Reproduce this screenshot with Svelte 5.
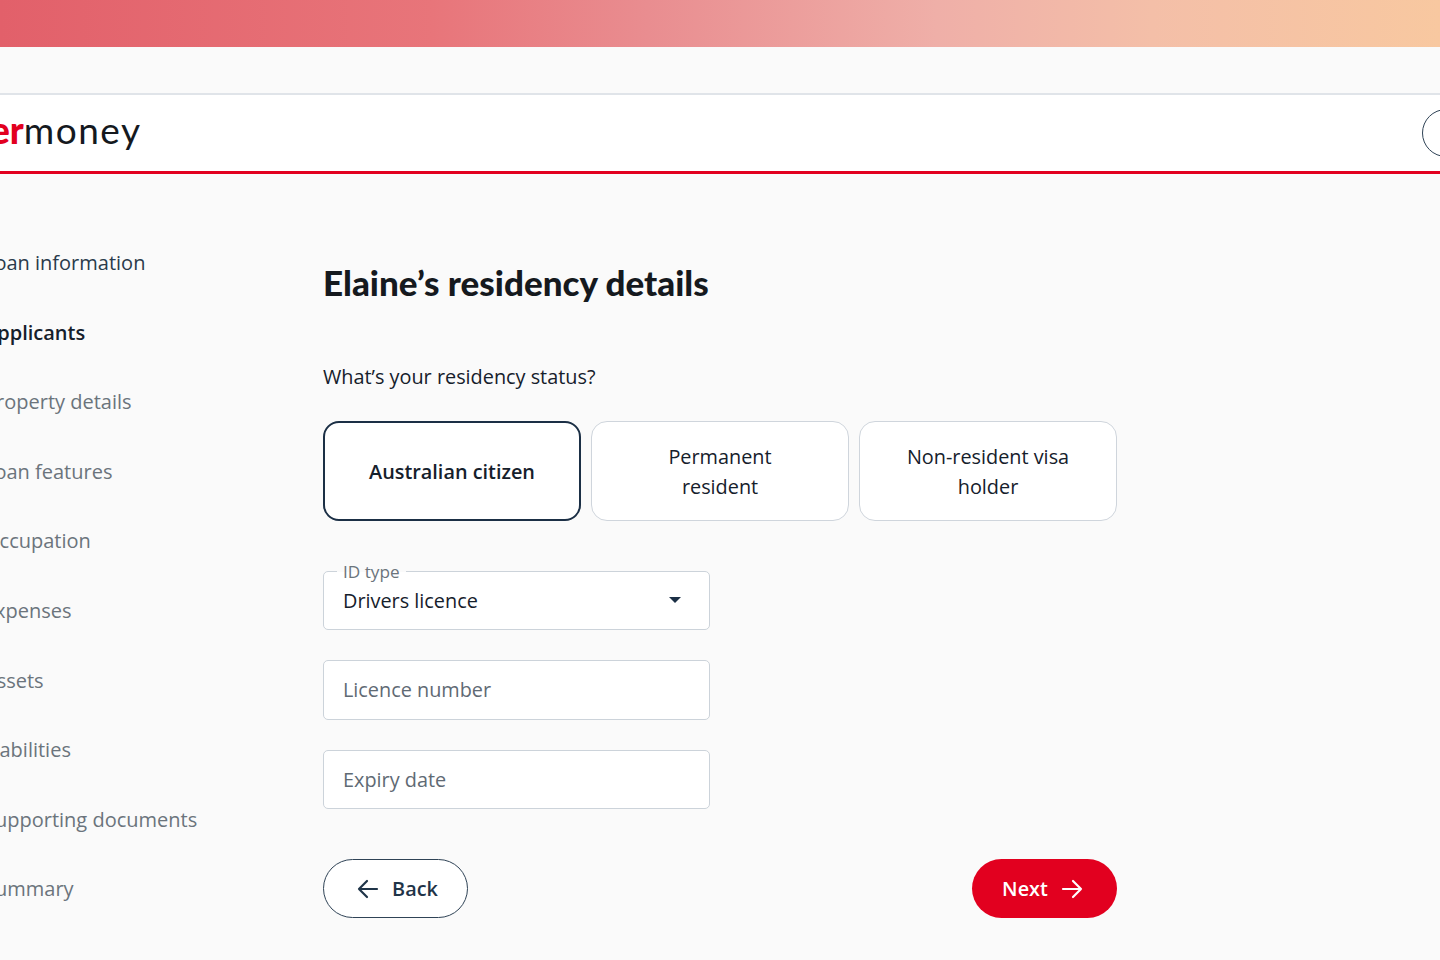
<script>
  const steps = [
    { label: "Loan information", state: "done" },
    { label: "Applicants", state: "active" },
    { label: "Property details" },
    { label: "Loan features" },
    { label: "Occupation" },
    { label: "Expenses" },
    { label: "Assets" },
    { label: "Liabilities" },
    { label: "Supporting documents" },
    { label: "Summary" },
  ];

  const statuses = [
    { label: "Australian citizen", selected: true },
    { label: "Permanent resident" },
    { label: "Non-resident visa holder" },
  ];
</script>

<div class="page">
  <div class="topbar"></div>

  <header>
    <div class="logo"><span class="red">er</span>money</div>
    <div class="avatar"></div>
  </header>

  <div class="layout">
    <nav>
      {#each steps as step}
        <a href="#top" class={step.state ?? ""}>{step.label}</a>
      {/each}
    </nav>

    <main>
      <h1>Elaine’s residency details</h1>
      <p class="question">What’s your residency status?</p>

      <div class="tiles">
        {#each statuses as status}
          <button class="tile" class:selected={status.selected}>
            <span>{status.label}</span>
          </button>
        {/each}
      </div>

      <div class="fields">
        <div class="field select">
          <span class="float">ID type</span>
          <span class="value">Drivers licence</span>
          <svg width="12" height="6" viewBox="0 0 12 6"><path d="M0 0h12L6 6z" fill="#1b2f45" /></svg>
        </div>
        <div class="field"><span class="placeholder">Licence number</span></div>
        <div class="field"><span class="placeholder">Expiry date</span></div>
      </div>

      <div class="actions">
        <button class="pill back">
          <svg width="22" height="20" viewBox="0 0 22 20" fill="none" stroke="currentColor" stroke-width="2.2" stroke-linecap="round" stroke-linejoin="round">
            <path d="M20 10H2M10 2l-8 8 8 8" />
          </svg>
          Back
        </button>
        <button class="pill next">
          Next
          <svg width="22" height="20" viewBox="0 0 22 20" fill="none" stroke="currentColor" stroke-width="2.2" stroke-linecap="round" stroke-linejoin="round">
            <path d="M2 10h18M12 2l8 8-8 8" />
          </svg>
        </button>
      </div>
    </main>
  </div>
</div>

<style>
  :global(body) {
    background: #fafafa;
    overflow: hidden;
  }

  .page {
    height: 960px;
    font-family: "Open Sans", sans-serif;
    color: #15202b;
    overflow: hidden;
  }

  .topbar {
    height: 47px;
    background: linear-gradient(90deg, #e2606a 0%, #e8757a 30%, #e98d90 45%, #efafa8 65%, #f4bfa8 80%, #f8c8a0 100%);
  }

  header {
    margin-top: 46px;
    height: 81px;
    box-sizing: border-box;
    border-top: 2px solid #e0e4e9;
    border-bottom: 3px solid #e2001f;
    background: #fff;
    display: flex;
    align-items: center;
    justify-content: space-between;
  }

  .logo {
    margin-left: -10px;
    margin-top: -7px;
    font-family: Lato, sans-serif;
    font-size: 37px;
    letter-spacing: 1.5px;
    color: #15191e;
    font-weight: 400;
  }

  .red {
    color: #e2001f;
    font-weight: 900;
    letter-spacing: 0;
  }

  .avatar {
    width: 48px;
    height: 48px;
    flex: none;
    box-sizing: border-box;
    border: 1.5px solid #2f4356;
    border-radius: 50%;
    margin-right: -30px;
  }

  .layout {
    display: flex;
  }

  nav {
    width: 339px;
    flex: none;
    margin-left: -16px;
    padding-top: 74px;
    display: flex;
    flex-direction: column;
    gap: 39.6px;
  }

  nav a {
    font-size: 20px;
    line-height: 30px;
    color: #6b747c;
    text-decoration: none;
    white-space: nowrap;
  }

  nav a.done {
    color: #2a3b4b;
  }

  nav a.active {
    color: #15202b;
    font-weight: 600;
  }

  main {
    width: 794px;
    padding-top: 84px;
  }

  h1 {
    margin: 0;
    font-family: Lato, sans-serif;
    font-weight: 900;
    font-size: 35px;
    line-height: 48px;
    color: #15191e;
  }

  .question {
    margin: 56px 0 0;
    font-size: 19.85px;
    line-height: 30px;
  }

  .tiles {
    margin-top: 29px;
    display: grid;
    grid-template-columns: repeat(3, 258px);
    gap: 10px;
  }

  button {
    font-family: inherit;
    cursor: pointer;
  }

  .tile {
    height: 100px;
    padding: 1px 40px 0;
    background: #fff;
    border: 1px solid #cfd5dc;
    border-radius: 16px;
    font-size: 19.85px;
    line-height: 30px;
    color: #15202b;
  }

  .tile.selected {
    border: 2.5px solid #1b2f45;
    font-weight: 600;
  }

  .fields {
    margin-top: 49.7px;
    width: 387px;
    display: flex;
    flex-direction: column;
    gap: 30px;
  }

  .field {
    position: relative;
    height: 59.5px;
    box-sizing: border-box;
    padding: 0 19px;
    background: #fff;
    border: 1px solid #ccd3da;
    border-radius: 5px;
    display: flex;
    align-items: center;
    justify-content: space-between;
    font-size: 19.85px;
  }

  .select svg {
    margin-right: 9px;
  }

  .float {
    position: absolute;
    left: 13px;
    top: -11px;
    padding: 0 6px;
    font-size: 17.2px;
    line-height: 22px;
    color: #6b747c;
    background: linear-gradient(#fafafa 50%, #fff 50%);
  }

  .placeholder {
    color: #5f6a74;
  }

  .actions {
    margin-top: 50px;
    display: flex;
    justify-content: space-between;
  }

  .pill {
    width: 145px;
    height: 59px;
    box-sizing: border-box;
    border-radius: 30px;
    font-size: 19.85px;
    font-weight: 600;
    display: flex;
    align-items: center;
    justify-content: center;
  }

  .back {
    gap: 13px;
    padding: 0 0 0 4px;
    background: #fff;
    border: 1.5px solid #2f4356;
    color: #1f3448;
  }

  .next {
    gap: 13px;
    padding: 0 4px 0 0;
    background: #e2001f;
    border: 0;
    color: #fff;
  }
</style>
